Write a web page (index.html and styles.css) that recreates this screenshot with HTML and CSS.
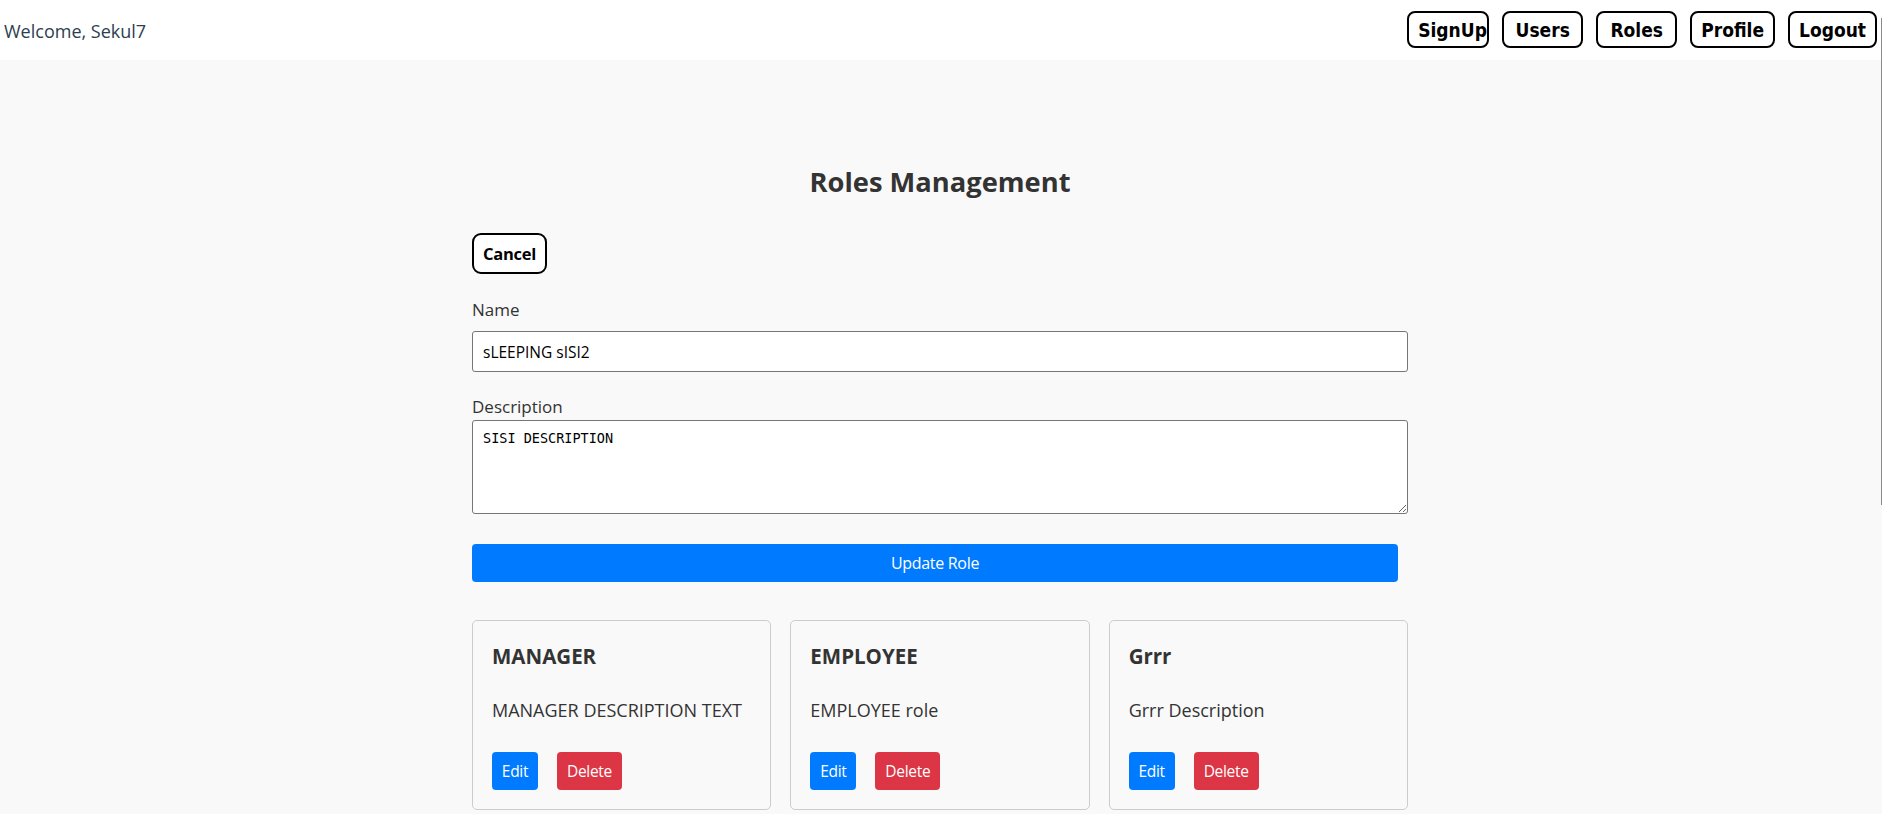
FILE: index.html
```html
<!DOCTYPE html>
<html lang="en">
<head>
<meta charset="utf-8">
<title>Roles Management</title>
<link rel="stylesheet" href="styles.css">
</head>
<body>
<header class="topbar">
  <span class="welcome">Welcome, Sekul7</span>
  <nav class="nav">
    <button class="nav-btn nav-btn-tight">SignUp</button>
    <button class="nav-btn">Users</button>
    <button class="nav-btn">Roles</button>
    <button class="nav-btn">Profile</button>
    <button class="nav-btn">Logout</button>
  </nav>
</header>
<div class="scroll-line"></div>
<main class="page">
  <h2 class="title">Roles Management</h2>
  <div class="toolbar">
    <button class="cancel-btn">Cancel</button>
  </div>
  <form class="role-form">
    <label class="field-label" for="name">Name</label>
    <input class="field-input" id="name" type="text" value="sLEEPING sISI2">
    <label class="field-label field-label-gap" for="desc">Description</label>
    <textarea class="field-textarea" id="desc">SISI DESCRIPTION</textarea>
    <button class="update-btn" type="button">Update Role</button>
  </form>
  <section class="cards">
    <article class="card">
      <h3 class="card-title">MANAGER</h3>
      <p class="card-desc">MANAGER DESCRIPTION TEXT</p>
      <div class="card-actions">
        <button class="btn btn-edit">Edit</button>
        <button class="btn btn-delete">Delete</button>
      </div>
    </article>
    <article class="card">
      <h3 class="card-title">EMPLOYEE</h3>
      <p class="card-desc">EMPLOYEE role</p>
      <div class="card-actions">
        <button class="btn btn-edit">Edit</button>
        <button class="btn btn-delete">Delete</button>
      </div>
    </article>
    <article class="card">
      <h3 class="card-title">Grrr</h3>
      <p class="card-desc">Grrr Description</p>
      <div class="card-actions">
        <button class="btn btn-edit">Edit</button>
        <button class="btn btn-delete">Delete</button>
      </div>
    </article>
  </section>
</main>
</body>
</html>
```

FILE: styles.css
```css
* { box-sizing: border-box; }

html, body {
  margin: 0;
  padding: 0;
}

body {
  background: #f9f9f9;
  font-family: "Open Sans", "Noto Sans", sans-serif;
  color: #333;
  overflow: hidden;
}

.topbar {
  height: 60px;
  background: #fff;
  display: flex;
  align-items: center;
  justify-content: space-between;
  padding: 0 5px 0 4px;
}

.welcome {
  font-size: 18px;
  color: #2c3e50;
  margin-top: 1px;
}

.nav {
  display: flex;
  gap: 13px;
  margin-top: -1px;
}

.nav-btn {
  height: 37px;
  min-width: 81px;
  padding: 0 9px;
  border: 2px solid #000;
  border-radius: 8px;
  background: #fff;
  color: #000;
  font-family: "DejaVu Sans Condensed", "DejaVu Sans", sans-serif;
  font-stretch: condensed;
  font-weight: bold;
  font-size: 19px;
  white-space: nowrap;
  display: inline-flex;
  align-items: center;
  justify-content: center;
}

.nav-btn-tight {
  width: 82px;
  min-width: 0;
  justify-content: flex-start;
  overflow: hidden;
  padding: 0 0 0 9px;
}

.scroll-line {
  position: fixed;
  right: 0;
  top: 18px;
  width: 1px;
  height: 487px;
  background: #8a8a8a;
}

.page {
  width: 936px;
  margin-left: calc(50% - 469px);
  padding-top: 105px;
}

.title {
  margin: 0;
  text-align: center;
  font-size: 27.3px;
  line-height: 34px;
  font-weight: 700;
  color: #333;
}

.toolbar {
  margin-top: 34px;
}

.cancel-btn {
  width: 75px;
  height: 41px;
  border: 2px solid #000;
  border-radius: 9px;
  background: #fff;
  color: #000;
  font-family: "Open Sans", sans-serif;
  font-weight: 700;
  font-size: 16.5px;
  letter-spacing: -0.3px;
  padding: 0;
}

.role-form {
  display: flex;
  flex-direction: column;
  align-items: flex-start;
  margin-top: 24px;
}

.field-label {
  font-size: 17px;
  line-height: 24px;
  color: #333;
}

.field-label-gap {
  margin-top: 23px;
}

.field-input {
  margin-top: 9px;
  width: 100%;
  height: 41px;
  padding: 0 10px;
  border: 1px solid #767676;
  border-radius: 3px;
  background: #fff;
  font-family: "Open Sans", sans-serif;
  font-size: 15.5px;
  color: #000;
}

.field-textarea {
  margin-top: 1px;
  width: 100%;
  height: 94px;
  padding: 9px 10px;
  border: 1px solid #767676;
  border-radius: 3px;
  background: #fff;
  font-family: "DejaVu Sans Mono", monospace;
  font-size: 13.5px;
  color: #000;
  resize: vertical;
}

.update-btn {
  margin-top: 30px;
  width: 926px;
  height: 38px;
  border: none;
  border-radius: 4px;
  background: #007bff;
  color: #fff;
  font-family: "Open Sans", sans-serif;
  font-size: 16px;
  letter-spacing: -0.3px;
}

.cards {
  margin-top: 38px;
  display: grid;
  grid-template-columns: repeat(3, 1fr);
  gap: 19px;
}

.card {
  border: 1px solid #ccc;
  border-radius: 5px;
  padding: 19px;
  background: #f9f9f9;
}

.card-title {
  margin: 4px 0 0;
  font-size: 20.5px;
  line-height: 24px;
  font-weight: 700;
  color: #333;
}

.card-desc {
  margin: 30px 0 0;
  font-size: 18px;
  line-height: 24px;
  color: #333;
  white-space: nowrap;
}

.card-actions {
  margin-top: 30px;
  display: flex;
  gap: 19px;
}

.btn {
  height: 38px;
  border: none;
  border-radius: 4px;
  color: #fff;
  font-family: "Open Sans", sans-serif;
  font-size: 15.5px;
  letter-spacing: -0.3px;
  padding: 0;
}

.btn-edit { background: #007bff; width: 46px; }
.btn-delete { background: #dc3545; width: 65px; }
```
